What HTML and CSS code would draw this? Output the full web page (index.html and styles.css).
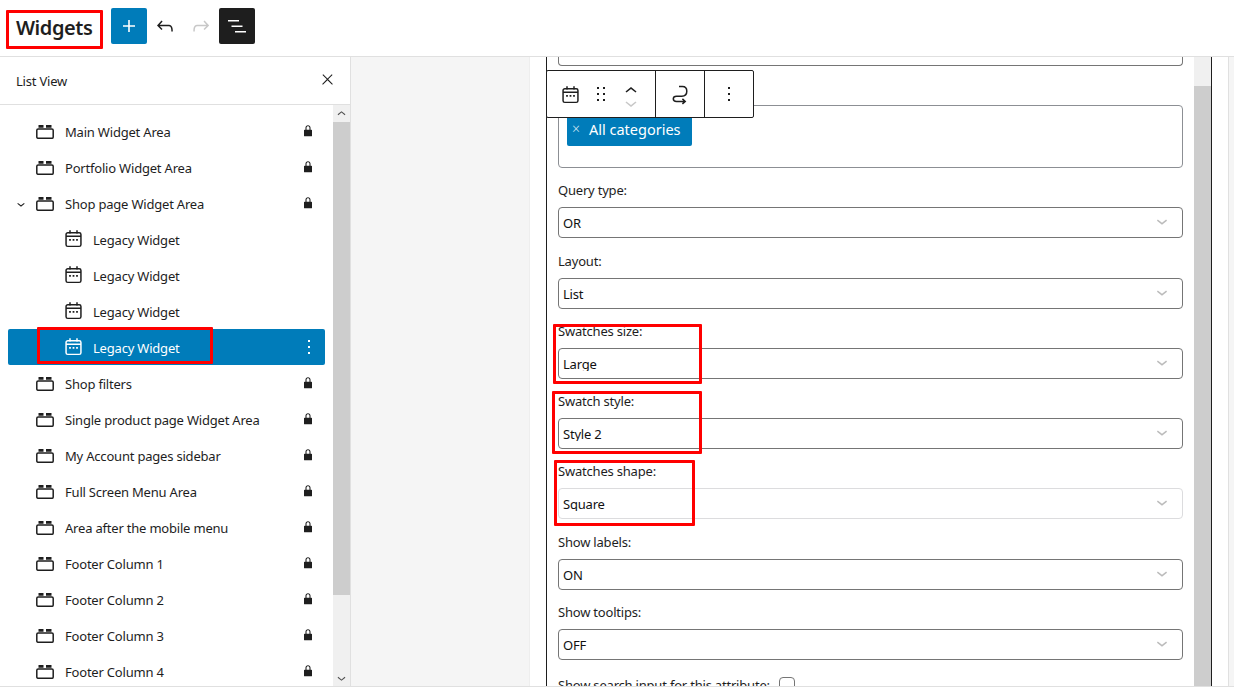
FILE: index.html
```html
<!DOCTYPE html>
<html lang="en">
<head>
<meta charset="utf-8">
<title>Widgets</title>
<link rel="stylesheet" href="styles.css">
</head>
<body>
<svg class="defs" aria-hidden="true">
  <symbol id="i-area" viewBox="0 0 18 14"><path fill="none" stroke="currentColor" stroke-width="1.5" d="M2.200 3.900h13.600c.8 0 1.400.6 1.400 1.400v6.600c0 .8-.6 1.400-1.400 1.400H2.200c-.8 0-1.400-.6-1.400-1.400V5.300c0-.8.6-1.400 1.400-1.400z"/><path fill="currentColor" d="M2.500 0h5v2.700h-5zM10 0h5.500v2.700H10z"/></symbol>
  <symbol id="i-cal" viewBox="0 0 24 24"><path fill="none" stroke="currentColor" stroke-width="1.700" d="M5.500 5.500h13c1.100 0 2 .9 2 2v11.500c0 1.100-.9 2-2 2h-13c-1.100 0-2-.9-2-2V7.500c0-1.100.9-2 2-2zM3.500 9.500h17M8 2.500v4M16 2.500v4"/><path fill="currentColor" d="M7 12.500h2v2H7zM11 12.500h2v2h-2zM15 12.500h2v2h-2z"/></symbol>
  <symbol id="i-lock" viewBox="0 0 24 24"><path fill="currentColor" d="M17 10h-1.200V7c0-2.100-1.700-3.800-3.800-3.800-2.100 0-3.800 1.700-3.800 3.800v3H7c-.6 0-1 .4-1 1v8c0 .6.4 1 1 1h10c.6 0 1-.4 1-1v-8c0-.6-.4-1-1-1zm-2.800 0H9.800V7c0-1.200 1-2.200 2.200-2.200 1.200 0 2.200 1 2.200 2.200v3z"/></symbol>
  <symbol id="i-down" viewBox="0 0 24 24"><path fill="currentColor" d="M17.500 11.600L12 16l-5.500-4.400.9-1.200L12 14l4.500-3.600 1 1.200z"/></symbol>
  <symbol id="i-up" viewBox="0 0 24 24"><path fill="currentColor" d="M6.500 12.400L12 8l5.500 4.400-.9 1.200L12 10l-4.500 3.600-1-1.200z"/></symbol>
  <symbol id="i-more" viewBox="0 0 24 24"><path fill="currentColor" d="M13 19h-2v-2h2v2zm0-6h-2v-2h2v2zm0-6h-2V5h2v2z"/></symbol>
</svg>

<div class="app">
  <header class="topbar">
    <h1 class="title">Widgets</h1>
    <button class="tool tool-primary" aria-label="Add block"><svg class="i24" viewBox="0 0 24 24"><path fill="currentColor" d="M18 11.200h-5.200V6h-1.600v5.200H6v1.600h5.200V18h1.600v-5.200H18z"/></svg></button>
    <button class="tool" aria-label="Undo"><svg class="i24" viewBox="0 0 24 24"><path fill="currentColor" d="M18.300 11.700c-.6-.6-1.400-.9-2.300-.9H6.700l2.900-3.300-1.100-1-4.500 5L8.500 16l1-1-2.700-2.700H16c.5 0 .9.2 1.300.5 1 1 1 3.400 1 4.500v.3h1.500v-.2c0-1.500 0-4.300-1.500-5.700z"/></svg></button>
    <button class="tool tool-off" aria-label="Redo"><svg class="i24" viewBox="0 0 24 24"><path fill="currentColor" d="M15.600 6.500l-1.100 1 2.900 3.300H8c-.9 0-1.700.3-2.300.9-1.400 1.500-1.400 4.200-1.400 5.600v.2h1.500v-.3c0-1.100 0-3.500 1-4.500.3-.3.7-.5 1.300-.5h9.200L14.500 15l1.100 1.100 4.600-4.600-4.600-5z"/></svg></button>
    <button class="tool tool-dark" aria-label="List view"><svg class="i24" viewBox="0 0 24 24"><path fill="currentColor" d="M3 6h11v1.500H3V6Zm3.500 5.500h11V13h-11v-1.500ZM21 17H10v1.500h11V17Z"/></svg></button>
  </header>

  <main class="main">
    <aside class="sidebar">
      <div class="sidebar-head">
        <span>List View</span>
        <svg class="close" viewBox="0 0 24 24"><path fill="currentColor" d="M13 11.800l6.100-6.300-1-1-6.100 6.200-6.100-6.200-1 1 6.100 6.300-6.500 6.700 1 1 6.500-6.600 6.500 6.600 1-1z"/></svg>
      </div>
      <div class="sidebar-body">
        <ul class="tree">
          <li class="row"><svg class="ic-area"><use href="#i-area"/></svg><span class="name">Main Widget Area</span><svg class="lock"><use href="#i-lock"/></svg></li>
          <li class="row"><svg class="ic-area"><use href="#i-area"/></svg><span class="name">Portfolio Widget Area</span><svg class="lock"><use href="#i-lock"/></svg></li>
          <li class="row"><svg class="caret"><use href="#i-down"/></svg><svg class="ic-area"><use href="#i-area"/></svg><span class="name">Shop page Widget Area</span><svg class="lock"><use href="#i-lock"/></svg></li>
          <li class="row child"><svg class="ic-cal"><use href="#i-cal"/></svg><span class="name">Legacy Widget</span></li>
          <li class="row child"><svg class="ic-cal"><use href="#i-cal"/></svg><span class="name">Legacy Widget</span></li>
          <li class="row child"><svg class="ic-cal"><use href="#i-cal"/></svg><span class="name">Legacy Widget</span></li>
          <li class="row child selected"><svg class="ic-cal"><use href="#i-cal"/></svg><span class="name">Legacy Widget</span><svg class="kebab"><use href="#i-more"/></svg></li>
          <li class="row"><svg class="ic-area"><use href="#i-area"/></svg><span class="name">Shop filters</span><svg class="lock"><use href="#i-lock"/></svg></li>
          <li class="row"><svg class="ic-area"><use href="#i-area"/></svg><span class="name">Single product page Widget Area</span><svg class="lock"><use href="#i-lock"/></svg></li>
          <li class="row"><svg class="ic-area"><use href="#i-area"/></svg><span class="name">My Account pages sidebar</span><svg class="lock"><use href="#i-lock"/></svg></li>
          <li class="row"><svg class="ic-area"><use href="#i-area"/></svg><span class="name">Full Screen Menu Area</span><svg class="lock"><use href="#i-lock"/></svg></li>
          <li class="row"><svg class="ic-area"><use href="#i-area"/></svg><span class="name">Area after the mobile menu</span><svg class="lock"><use href="#i-lock"/></svg></li>
          <li class="row"><svg class="ic-area"><use href="#i-area"/></svg><span class="name">Footer Column 1</span><svg class="lock"><use href="#i-lock"/></svg></li>
          <li class="row"><svg class="ic-area"><use href="#i-area"/></svg><span class="name">Footer Column 2</span><svg class="lock"><use href="#i-lock"/></svg></li>
          <li class="row"><svg class="ic-area"><use href="#i-area"/></svg><span class="name">Footer Column 3</span><svg class="lock"><use href="#i-lock"/></svg></li>
          <li class="row"><svg class="ic-area"><use href="#i-area"/></svg><span class="name">Footer Column 4</span><svg class="lock"><use href="#i-lock"/></svg></li>
        </ul>
        <div class="scrollbar">
          <div class="sb-btn"><svg class="sb-arrow"><use href="#i-up"/></svg></div>
          <div class="sb-thumb"></div>
          <div class="sb-track"></div>
          <div class="sb-btn"><svg class="sb-arrow"><use href="#i-down"/></svg></div>
        </div>
      </div>
    </aside>

    <section class="canvas">
      <div class="page">
        <div class="widget">
          <div class="form">
            <div class="input-tail"></div>
            <div class="tagbox"><span class="tag"><span class="tag-x">×</span>All categories</span></div>
            <div class="field first"><div class="label">Query type:</div><div class="select"><span class="value">OR</span><svg class="chev"><use href="#i-down"/></svg></div></div>
            <div class="field"><div class="label">Layout:</div><div class="select"><span class="value">List</span><svg class="chev"><use href="#i-down"/></svg></div></div>
            <div class="field"><div class="label">Swatches size:</div><div class="select"><span class="value">Large</span><svg class="chev"><use href="#i-down"/></svg></div></div>
            <div class="field"><div class="label">Swatch style:</div><div class="select"><span class="value">Style 2</span><svg class="chev"><use href="#i-down"/></svg></div></div>
            <div class="field"><div class="label">Swatches shape:</div><div class="select disabled"><span class="value">Square</span><svg class="chev"><use href="#i-down"/></svg></div></div>
            <div class="field"><div class="label">Show labels:</div><div class="select"><span class="value">ON</span><svg class="chev"><use href="#i-down"/></svg></div></div>
            <div class="field"><div class="label">Show tooltips:</div><div class="select"><span class="value">OFF</span><svg class="chev"><use href="#i-down"/></svg></div></div>
            <div class="field check"><span>Show search input for this attribute:</span><span class="checkbox"></span></div>
          </div>
          <div class="page-scroll"><div class="ps-track"></div><div class="ps-thumb"></div></div>
          <div class="block-toolbar">
            <div class="tb-group">
              <svg class="tb-cal"><use href="#i-cal"/></svg>
              <svg class="tb-drag" viewBox="0 0 24 24"><path fill="currentColor" d="M8 7h2V5H8v2zm0 6h2v-2H8v2zm0 6h2v-2H8v2zm6-14v2h2V5h-2zm0 8h2v-2h-2v2zm0 6h2v-2h-2v2z"/></svg>
              <div class="tb-move"><svg class="mv"><use href="#i-up"/></svg><svg class="mv off"><use href="#i-down"/></svg></div>
            </div>
            <div class="tb-group tb-mid">
              <svg class="tb-ico" viewBox="0 0 24 24"><path fill="none" stroke="currentColor" stroke-width="1.500" d="M11 4.500h3.500c2.500 0 4.300 1.500 4.300 4.800s-2 4.900-5 4.900H8.500c-2 0-3.200 1-3.200 2.600s1.200 2.600 3.200 2.600H17M14.400 16.900l2.800 2.500-2.800 2.500"/></svg>
            </div>
            <div class="tb-group tb-last"><svg class="tb-ico"><use href="#i-more"/></svg></div>
          </div>
        </div>
      </div>
    </section>
  </main>
  <footer class="foot"></footer>
</div>

<div class="mark mark-title"></div>
<div class="mark mark-row"></div>
<div class="mark mark-size"></div>
<div class="mark mark-style"></div>
<div class="mark mark-shape"></div>
</body>
</html>
```

FILE: styles.css
```css
* { box-sizing: border-box; }
html, body { margin: 0; height: 100%; overflow: hidden; background: #fff; }
body { font-family: "Noto Sans", "Open Sans", sans-serif; font-size: 13px; color: #1e1e1e; letter-spacing: -0.2px; }
.defs { display: none; }

.app { display: flex; flex-direction: column; height: 694px; }

/* top bar */
.topbar { flex: 0 0 57px; display: flex; align-items: flex-start; padding-top: 8px; border-bottom: 1px solid #e0e0e0; }
.title { margin: 0 0 0 16px; width: 95px; font-size: 20px; font-weight: 600; line-height: 40px; letter-spacing: -0.45px; }
.tool { width: 36px; height: 36px; padding: 6px; border: 0; border-radius: 2px; background: none; color: #1e1e1e; display: flex; }
.tool-primary { background: #007cba; color: #fff; }
.tool-off { color: #c8c8c8; }
.tool-dark { background: #1e1e1e; color: #fff; }
.i24 { width: 24px; height: 24px; }

.main { flex: 1; display: flex; min-height: 0; }
.foot { flex: 0 0 8px; border-top: 1px solid #e0e0e0; background: #fff; }

/* sidebar */
.sidebar { flex: 0 0 351px; display: flex; flex-direction: column; border-right: 1px solid #e0e0e0; }
.sidebar-head { flex: 0 0 48px; display: flex; align-items: center; justify-content: space-between; padding: 0 14px 0 16px; border-bottom: 1px solid #e0e0e0; }
.close { width: 17px; height: 17px; margin-top: -2px; }
.sidebar-body { flex: 1; display: flex; min-height: 0; overflow: hidden; }
.tree { list-style: none; margin: 0; padding: 8px 8px 0; width: 333px; flex: none; }
.row { position: relative; height: 36px; display: flex; align-items: center; padding: 2px 0 0 28px; border-radius: 2px; }
.child { padding-left: 54.500px; }
.ic-area { width: 18px; height: 14px; margin-right: 11px; flex: none; }
.ic-cal { width: 21px; height: 21px; margin-right: 9.500px; margin-top: -3px; flex: none; }
.name { white-space: nowrap; }
.caret { position: absolute; left: 5px; top: 11px; width: 16px; height: 16px; }
.lock { position: absolute; left: 292px; top: 10px; width: 16px; height: 16px; }
.selected { background: #007cba; color: #fff; }
.kebab { position: absolute; left: 289px; top: 6px; width: 24px; height: 24px; }

.scrollbar { width: 17px; flex: none; display: flex; flex-direction: column; background: #f0f0f0; }
.sb-btn { height: 17px; flex: none; display: flex; align-items: center; justify-content: center; color: #505050; }
.sb-arrow { width: 18px; height: 18px; }
.sb-thumb { height: 473px; flex: none; background: #cdcdcd; }
.sb-track { flex: 1; }

/* canvas */
.canvas { flex: 1; min-width: 0; display: flex; background: #f5f5f5; }
.page { margin-left: 178px; width: 700px; background: #fff; border-left: 1px solid #eee; border-right: 1px solid #e0e0e0; padding-left: 16px; padding-right: 16px; }
.widget { position: relative; height: 100%; display: flex; border-left: 1px solid #1e1e1e; border-right: 1px solid #1e1e1e; }
.form { flex: 1; min-width: 0; padding: 0 11px 0 11px; overflow: hidden; }
.input-tail { height: 9px; border: 1px solid #757575; border-top: 0; border-radius: 0 0 4px 4px; }
.tagbox { margin-top: 39px; height: 63px; border: 1px solid #8c8f94; border-radius: 4px; padding: 7px 8px; }
.tag { display: inline-flex; align-items: center; height: 33px; padding: 0 11px 2px 5px; background: #007cba; border-radius: 2px; color: #fff; font-size: 14.500px; letter-spacing: 0; }
.tag-x { width: 17px; font-size: 14px; font-weight: 300; color: #d5e8f3; }

.field { margin-top: 13.270px; }
.field.first { margin-top: 13.300px; }
.label { height: 18px; line-height: 18px; margin-bottom: 8px; }
.select { position: relative; height: 31px; border: 1px solid #757575; border-radius: 4px; padding: 6px 4px 0; }
.select.disabled { border-color: #dcdcde; }
.value { display: block; height: 16px; line-height: 18px; overflow: hidden; color: #111; }
.chev { position: absolute; right: 9px; top: 2px; width: 22px; height: 22px; color: #bbb; }
.field.check { display: flex; align-items: center; gap: 9px; height: 18px; margin-top: 16px; }
.checkbox { width: 16px; height: 16px; border: 1px solid #757575; border-radius: 4px; flex: none; }

.page-scroll { width: 17px; flex: none; display: flex; flex-direction: column; }
.ps-track { height: 29px; background: #f0f0f0; }
.ps-thumb { flex: 1; background: #cdcdcd; }

/* block toolbar */
.block-toolbar { position: absolute; left: -1px; top: 13px; height: 48px; display: flex; background: #fff; border: 1px solid #1e1e1e; border-radius: 2px; }
.tb-group { display: flex; align-items: center; height: 100%; border-right: 1px solid #1e1e1e; }
.tb-group:first-child { width: 109px; padding-left: 13px; }
.tb-mid { width: 49px; justify-content: center; }
.tb-last { width: 48px; justify-content: center; border-right: 0; }
.tb-cal { width: 21px; height: 21px; }
.tb-drag { width: 24px; height: 24px; margin-left: 8px; }
.tb-move { display: flex; flex-direction: column; margin-left: 6px; margin-top: -6px; }
.mv { width: 24px; height: 24px; margin-bottom: -11.700px; }
.mv.off { color: #c8c8c8; }
.tb-ico { width: 24px; height: 24px; }

/* red annotation rectangles laid over the screenshot */
.mark { position: absolute; border: 3px solid #f00; border-radius: 1px; pointer-events: none; }
.mark-title { left: 6px; top: 10px; width: 97px; height: 39px; }
.mark-row { left: 37px; top: 327px; width: 176px; height: 37px; }
.mark-size { left: 553px; top: 324px; width: 149px; height: 60px; }
.mark-style { left: 552px; top: 391px; width: 150px; height: 63px; }
.mark-shape { left: 554px; top: 460px; width: 141px; height: 66px; }
```
